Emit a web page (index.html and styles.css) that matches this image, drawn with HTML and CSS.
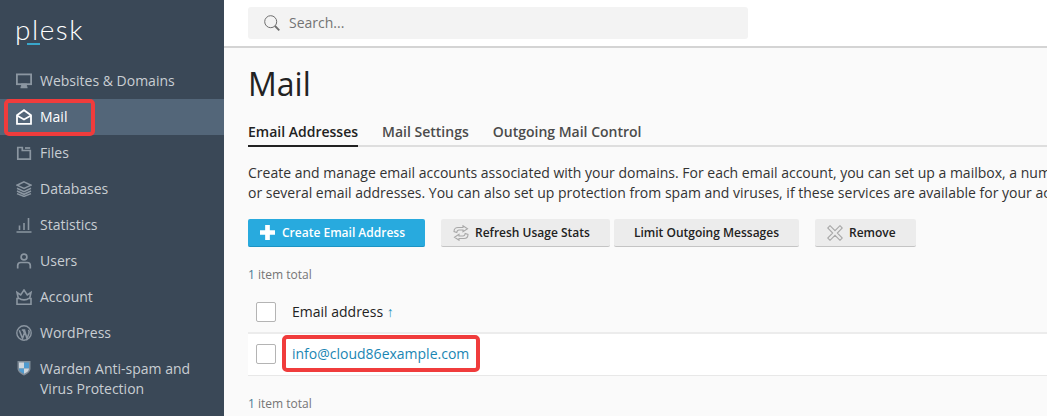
FILE: index.html
```html
<!DOCTYPE html>
<html lang="en">
<head>
    <meta charset="UTF-8">
    <meta name="viewport" content="width=device-width, initial-scale=1.0">
    <title>Mail - Plesk</title>
    <link rel="stylesheet" href="styles.css">
</head>
<body>
    <aside class="sidebar">
        <div class="logo"><span class="logo-text">plesk</span><span class="logo-bar"></span></div>
        <nav class="nav">
            <a class="nav-item">
                <svg class="nav-icon" viewBox="0 0 16 16" fill="none" stroke="currentColor" stroke-width="1.800"><rect x="0.900" y="1.400" width="14.200" height="9.800"/><path d="M4.500 14.300h7M6 11.500h4v2H6z"/></svg>
                <span>Websites &amp; Domains</span>
            </a>
            <a class="nav-item active">
                <svg class="nav-icon" viewBox="0 0 16 16" fill="none" stroke="currentColor" stroke-width="1.800"><path d="M1 6.300 8 1.200l7 5.100v8.500H1z"/><path d="M1 6.500 8 10.500l7-4"/></svg>
                <span>Mail</span>
                <span class="mark mark-nav"></span>
            </a>
            <a class="nav-item">
                <svg class="nav-icon" viewBox="0 0 16 16" fill="none" stroke="currentColor" stroke-width="1.700"><path d="M1.800 2.500h4.500v3h8v8.700H1.800z"/><path d="M9 3h5.200"/></svg>
                <span>Files</span>
            </a>
            <a class="nav-item">
                <svg class="nav-icon" viewBox="0 0 16 16" fill="none" stroke="currentColor" stroke-width="1.500"><path d="M8 .9 15 4.200 8 7.500 1 4.200z"/><path d="M1 7.300 8 10.600l7-3.300M1 10 8 13.300l7-3.300M1 12.600 8 15.400l7-2.800"/></svg>
                <span>Databases</span>
            </a>
            <a class="nav-item">
                <svg class="nav-icon" viewBox="0 0 16 16" fill="none" stroke="currentColor" stroke-width="1.600"><path d="M.5 15h15M3.500 13V8.500M8 13V6M12.500 13V1"/></svg>
                <span>Statistics</span>
            </a>
            <a class="nav-item">
                <svg class="nav-icon" viewBox="0 0 16 16" fill="none" stroke="currentColor" stroke-width="1.700"><circle cx="8" cy="4" r="2.900"/><path d="M1.700 15.500v-3c0-1.800 1.300-3 3-3h6.600c1.700 0 3 1.200 3 3v3"/></svg>
                <span>Users</span>
            </a>
            <a class="nav-item">
                <svg class="nav-icon" viewBox="0 0 16 16" fill="none" stroke="currentColor" stroke-width="1.600"><path d="M2.500 10 1 3.500 4.700 6 8 1l3.300 5L15 3.500 13.500 10"/><path d="M1 9.500h2.500c1.500 1.800 7.500 1.800 9 0H15v5.700H1z"/></svg>
                <span>Account</span>
            </a>
            <a class="nav-item">
                <svg class="nav-icon" viewBox="0 0 16 16" fill="none" stroke="currentColor" stroke-width="1.400"><circle cx="8" cy="8" r="7.200"/><path d="M3.300 5.200 6.500 13.500 8.400 8 7.300 5.200M5.800 5H9.300M8.400 5 11 13.500l1.900-5c.5-1.500 0-3-.5-3.500" stroke-width="1.600"/></svg>
                <span>WordPress</span>
            </a>
            <a class="nav-item nav-item-wrap">
                <svg class="nav-icon nav-icon-shield" viewBox="0 0 16 16"><path d="M1.500 1h13v7.500c0 3.500-3.300 5.500-6.500 7-3.200-1.500-6.500-3.500-6.500-7z" fill="#7f8b97"/><path d="M3 2.500h5v6H3z" fill="#cfd6dc"/><path d="M8 2.500h5v6H8zM3 8.500h5v5.300c-2.500-1.200-5-2.800-5-5.300z" fill="#4f9bd0"/><path d="M8 8.500h5c0 2.500-2.500 4.100-5 5.300z" fill="#cfd6dc"/></svg>
                <span>Warden Anti-spam and Virus Protection</span>
            </a>
        </nav>
    </aside>

    <div class="main">
        <header class="topbar">
            <div class="search">
                <svg class="search-icon" viewBox="0 0 16 16" fill="none" stroke="#6f6f6f" stroke-width="1"><circle cx="6.700" cy="6.700" r="6"/><path d="m11 11 4.300 4.300" stroke-width="1.800"/></svg>
                <span>Search...</span>
            </div>
        </header>

        <section class="content">
            <h1>Mail</h1>
            <div class="tabs">
                <a class="tab tab-active">Email Addresses</a>
                <a class="tab">Mail Settings</a>
                <a class="tab">Outgoing Mail Control</a>
            </div>
            <p class="intro">Create and manage email accounts associated with your domains. For each email account, you can set up a mailbox, a number of mail aliases, forwarding to one<br>or several email addresses. You can also set up protection from spam and viruses, if these services are available for your account.</p>

            <div class="toolbar">
                <button class="btn btn-primary">
                    <svg class="btn-plus" viewBox="0 0 16 16"><path d="M5.500 0h5v5.500H16v5h-5.500V16h-5v-5.500H0v-5h5.500z" fill="#fff"/></svg>
                    Create Email Address
                </button>
                <button class="btn btn-refresh">
                    <svg class="btn-icon" viewBox="0 0 16 16" fill="none" stroke="#a8a8a8" stroke-width="1.100"><path d="M1 6.500C1 3.500 3 2.500 5 2.500h5V.8l4.500 3-4.500 3V5H6C4.500 5 4 6 3.800 7.500z"/><path d="M15 9.500c0 3-2 4-4 4H6v1.700l-4.500-3 4.500-3V11h4c1.500 0 2-1 2.200-2.500z"/></svg>
                    Refresh Usage Stats
                </button>
                <button class="btn btn-limit">Limit Outgoing Messages</button>
                <button class="btn btn-remove">
                    <svg class="btn-icon" viewBox="0 0 16 16" fill="none" stroke="#a8a8a8" stroke-width="1.100"><path d="M3 .7 8 5.700l5-5L15.300 3l-5 5 5 5-2.300 2.300-5-5-5 5L.7 13l5-5-5-5z"/></svg>
                    Remove
                </button>
            </div>

            <div class="total total-top"><span class="total-num">1</span> item total</div>

            <div class="list-head">
                <span class="check"></span>
                <span class="head-label">Email address <span class="sort">↑</span></span>
            </div>
            <div class="list-row">
                <span class="check"></span>
                <a class="mail-link">info@cloud86example.com<span class="mark mark-link"></span></a>
            </div>

            <div class="total total-bottom"><span class="total-num">1</span> item total</div>
        </section>
    </div>
</body>
</html>
```

FILE: styles.css
```css
* {
    box-sizing: border-box;
}
html, body {
    height: 100%;
}
body {
    margin: 0;
    display: flex;
    overflow: hidden;
    font-family: "Open Sans", Arial, sans-serif;
    font-size: 14px;
    line-height: 20px;
    color: #222;
    background-color: #fafafa;
}

/* sidebar */
.sidebar {
    width: 224px;
    flex-shrink: 0;
    background-color: #3a4857;
    color: #c9ced3;
}
.logo {
    position: relative;
    height: 63px;
    padding: 7px 0 0 15px;
}
.logo-text {
    font-family: Lato, "Open Sans", sans-serif;
    font-weight: 300;
    font-size: 28px;
    line-height: 44px;
    letter-spacing: 1.500px;
    color: #fff;
}
.logo-bar {
    position: absolute;
    left: 27px;
    top: 43px;
    width: 13px;
    height: 2px;
    background-color: #39a7cb;
}
.nav-item {
    position: relative;
    display: flex;
    align-items: center;
    gap: 8px;
    min-height: 36px;
    padding: 8px 10px 8px 16px;
}
.nav-item-wrap {
    align-items: flex-start;
}
.nav-icon {
    width: 16px;
    height: 16px;
    flex-shrink: 0;
    color: #8b96a1;
}
.nav-icon-shield {
    margin-top: 1px;
}
.active {
    background-color: #536679;
    color: #fff;
}
.active .nav-icon {
    color: #fff;
}

/* red annotation frames */
.mark {
    position: absolute;
    border: 4px solid #f03c3c;
    border-radius: 5px;
}
.mark-nav {
    left: 4px;
    top: 0;
    width: 91px;
    height: 37px;
}
.mark-link {
    left: -10px;
    top: -9px;
    width: 198px;
    height: 37px;
}

/* top bar */
.main {
    flex: 1;
    min-width: 0;
}
.topbar {
    height: 48px;
    padding: 7px 24px;
    background-color: #fff;
    border-bottom: 2px solid #d4d4d4;
}
.search {
    display: flex;
    align-items: center;
    gap: 9px;
    width: 500px;
    height: 32px;
    padding-left: 16px;
    background-color: #f3f3f3;
    border-radius: 3px;
    color: #737373;
}
.search-icon {
    width: 16px;
    height: 16px;
}

/* content */
.content {
    padding: 0 0 0 24px;
}
h1 {
    margin: 0;
    padding-top: 14px;
    font-size: 32px;
    line-height: 44px;
    font-weight: 400;
    color: #222;
}
.tabs {
    display: flex;
    gap: 24px;
    margin-top: 16px;
    border-bottom: 2px solid #dedede;
}
.tab {
    margin-bottom: -2px;
    padding-bottom: 3px;
    font-weight: 600;
    color: #4b4b4b;
    border-bottom: 2px solid transparent;
}
.tab-active {
    color: #222;
    border-bottom-color: #222;
}
.intro {
    margin: 16px 0 0;
    white-space: nowrap;
    color: #333;
}
.toolbar {
    display: flex;
    margin-top: 16px;
}
.btn {
    display: flex;
    align-items: center;
    height: 28px;
    padding: 0 0 0 12px;
    font-family: inherit;
    font-size: 12px;
    font-weight: 600;
    color: #222;
    background-color: #ececec;
    border: none;
    border-bottom: 1px solid #c4c4c4;
    border-radius: 2px;
}
.btn-primary {
    width: 177px;
    gap: 7px;
    color: #fff;
    background-color: #28aade;
    border-bottom-color: #1c93c3;
}
.btn-plus {
    width: 15px;
    height: 15px;
}
.btn-icon {
    width: 16px;
    height: 16px;
}
.btn-refresh {
    width: 169px;
    gap: 6px;
    margin-left: 16px;
}
.btn-limit {
    width: 185px;
    margin-left: 4px;
    padding: 0;
    justify-content: center;
}
.btn-remove {
    width: 101px;
    gap: 6px;
    margin-left: 16px;
}
.total {
    font-size: 12px;
    color: #757575;
}
.total-num {
    color: #4a7d96;
}
.total-top {
    margin-top: 18px;
}
.total-bottom {
    margin-top: 18px;
}
.list-head,
.list-row {
    display: flex;
    align-items: center;
    gap: 16px;
    padding-left: 8px;
}
.list-head {
    height: 49px;
    padding-top: 6px;
    border-bottom: 2px solid #ececec;
}
.list-row {
    height: 42px;
    padding-bottom: 1px;
    background-color: #fff;
    border-bottom: 1px solid #e8e8e8;
}
.check {
    width: 20px;
    height: 20px;
    flex-shrink: 0;
    background-color: #fff;
    border: 1px solid #b4b4b4;
    border-radius: 2px;
}
.sort {
    color: #2c8fbb;
}
.mail-link {
    position: relative;
    color: #1a86b3;
}
```
